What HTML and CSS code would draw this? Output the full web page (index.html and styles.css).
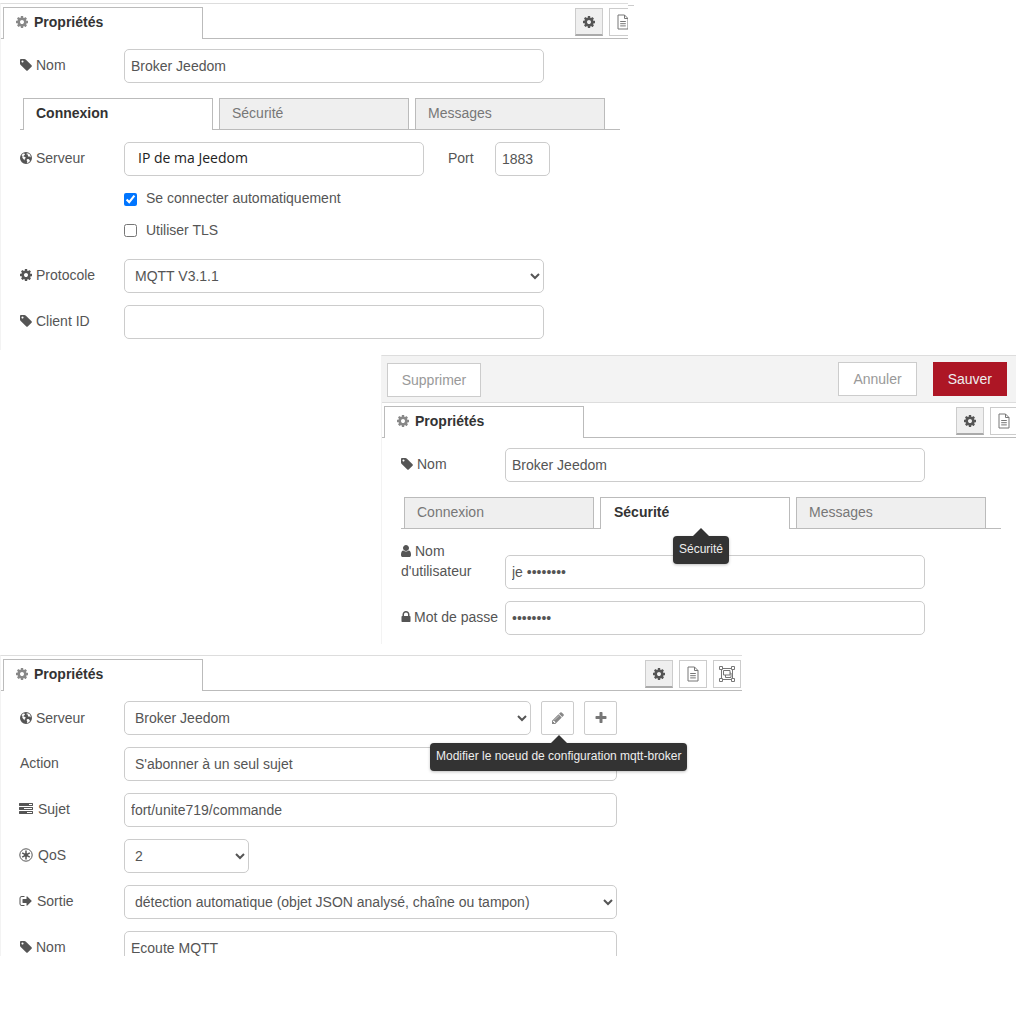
FILE: index.html
```html
<!DOCTYPE html>
<html lang="fr">
<head>
    <meta charset="UTF-8" />
    <title>Propriétés MQTT</title>
    <link rel="stylesheet" href="styles.css">
</head>
<body>
    <svg class="sprite" xmlns="http://www.w3.org/2000/svg">
        <symbol id="i-cog" viewBox="0 0 1792 1792"><path d="M1152 896q0-106-75-181t-181-75-181 75-75 181 75 181 181 75 181-75 75-181zm512-109v222q0 12-8 23t-20 13l-185 28q-19 54-39 91 35 50 107 138 10 12 10 25t-9 23q-27 37-99 108t-94 71q-12 0-26-9l-138-108q-44 23-91 38-16 136-29 186-7 28-36 28h-222q-14 0-24.5-8.5t-11.5-21.5l-28-184q-49-16-90-37l-141 107q-10 9-25 9-14 0-25-11-126-114-165-168-7-10-7-23 0-12 8-23 15-21 51-66.5t54-70.5q-27-50-41-99l-183-27q-13-2-21-12.5t-8-23.5v-222q0-12 8-23t19-13l186-28q14-46 39-92-40-57-107-138-10-12-10-24 0-10 9-23 26-36 98.5-107.5t94.5-71.5q13 0 26 10l138 107q44-23 91-38 16-136 29-186 7-28 36-28h222q14 0 24.5 8.5t11.5 21.5l28 184q49 16 90 37l142-107q9-9 24-9 13 0 25 10 129 119 165 170 7 8 7 22 0 12-8 23-15 21-51 66.5t-54 70.5q26 50 41 98l183 28q13 2 21 12.5t8 23.5z"/></symbol>
        <symbol id="i-tag" viewBox="0 0 1792 1792"><path d="M576 448q0-53-37.5-90.5t-90.5-37.5-90.5 37.5-37.5 90.5 37.5 90.5 90.5 37.5 90.5-37.5 37.5-90.5zm1067 576q0 53-37 90l-491 492q-39 37-91 37-53 0-90-37l-715-716q-38-37-64.5-101t-26.5-117v-416q0-52 38-90t90-38h416q53 0 117 26.5t102 64.5l715 714q37 39 37 91z"/></symbol>
        <symbol id="i-globe" viewBox="0 0 1792 1792"><path fill-rule="evenodd" d="M896 128a768 768 0 1 0 0 1536a768 768 0 1 0 0-1536zM640 300c-120 50-230 130-310 240c60 30 110 70 120 130c10 70-40 110-20 180c30 90 120 130 170 210c30 60 50 130 90 130c30 0 10-90 30-150c30-80 130-90 130-190c0-80-110-100-190-110c-60-10-90-70-60-130c40-60 130-60 160-120c20-50-60-100-120-190zM1010 280c-40 50-70 90-40 140c40 60 130 10 170 70c40 70-40 130 10 190c60 60 150-10 220 30c70 40 40 120 110 130c30-150-20-330-150-450c-90-70-200-110-320-110zM1180 1020c-90 0-190 40-200 120c-10 90 70 130 70 210c0 70-60 120-30 170c170-30 320-130 410-280c-40-30-80-40-100-100c-20-70-70-120-150-120z"/></symbol>
        <symbol id="i-user" viewBox="0 0 1792 1792"><path d="M1536 1399q0 109-62.5 187t-150.5 78h-854q-88 0-150.5-78t-62.5-187q0-85 8.5-160.5t31.5-152 58.5-131 94-89 134.5-34.5q131 128 313 128t313-128q76 0 134.5 34.5t94 89 58.5 131 31.5 152 8.5 160.5zm-256-887q0 159-112.5 271.5t-271.5 112.5-271.5-112.5-112.5-271.5 112.5-271.5 271.5-112.5 271.5 112.5 112.5 271.5z"/></symbol>
        <symbol id="i-lock" viewBox="0 0 1792 1792"><path d="M640 768h512v-192q0-106-75-181t-181-75-181 75-75 181v192zm832 96v576q0 40-28 68t-68 28h-960q-40 0-68-28t-28-68v-576q0-40 28-68t68-28h32v-192q0-184 132-316t316-132 316 132 132 316v192h32q40 0 68 28t28 68z"/></symbol>
        <symbol id="i-pencil" viewBox="0 0 1792 1792"><path d="M491 1536l91-91-235-235-91 91v107h128v128h107zm523-928q0-22-22-22-10 0-17 7l-542 542q-7 7-7 17 0 22 22 22 10 0 17-7l542-542q7-7 7-17zm-54-192l416 416-832 832h-416v-416zm683 96q0 53-37 90l-166 166-416-416 166-165q36-38 90-38 53 0 91 38l235 234q37 39 37 91z"/></symbol>
        <symbol id="i-plus" viewBox="0 0 1792 1792"><path d="M1600 736v192q0 40-28 68t-68 28h-416v416q0 40-28 68t-68 28h-192q-40 0-68-28t-28-68v-416h-416q-40 0-68-28t-28-68v-192q0-40 28-68t68-28h416v-416q0-40 28-68t68-28h192q40 0 68 28t28 68v416h416q40 0 68 28t28 68z"/></symbol>
        <symbol id="i-tasks" viewBox="0 0 1792 1792"><path d="M1024 1408h640v-128h-640v128zm-384-512h1024v-128h-1024v128zm640-512h384v-128h-384v128zm512 832v256q0 26-19 45t-45 19h-1664q-26 0-45-19t-19-45v-256q0-26 19-45t45-19h1664q26 0 45 19t19 45zm0-512v256q0 26-19 45t-45 19h-1664q-26 0-45-19t-19-45v-256q0-26 19-45t45-19h1664q26 0 45 19t19 45zm0-512v256q0 26-19 45t-45 19h-1664q-26 0-45-19t-19-45v-256q0-26 19-45t45-19h1664q26 0 45 19t19 45z"/></symbol>
        <symbol id="i-signout" viewBox="0 0 1792 1792"><path d="M704 1440q0 4 1 20t.5 26.5-3 23.5-10 19.5-20.5 6.5h-320q-119 0-203.5-84.5t-84.5-203.5v-704q0-119 84.5-203.5t203.5-84.5h320q13 0 22.5 9.5t9.5 22.5q0 4 1 20t.5 26.5-3 23.5-10 19.5-20.5 6.5h-320q-66 0-113 47t-47 113v704q0 66 47 113t113 47h312l11.5 1 11.5 3 8 5.5 7 9 2 13.5zm928-544q0 26-19 45l-544 544q-19 19-45 19t-45-19-19-45v-288h-448q-26 0-45-19t-19-45v-384q0-26 19-45t45-19h448v-288q0-26 19-45t45-19 45 19l544 544q19 19 19 45z"/></symbol>
        <symbol id="i-qos" viewBox="0 0 14 14"><circle cx="7" cy="7" r="6.2" fill="none" stroke="currentColor" stroke-width="1"/><path d="M7 2.6v8.8M3.2 4.8l7.6 4.4M10.8 4.8l-7.6 4.4" fill="none" stroke="currentColor" stroke-width="1.5"/><circle cx="7" cy="7" r="1.8"/></symbol>
        <symbol id="i-file" viewBox="0 0 14 16"><path d="M2 1h6.5L12 4.5V15H2zM8.5 1v3.5H12M4.2 7.5h5.6M4.2 9.7h5.6M4.2 11.9h5.6" fill="none" stroke="currentColor" stroke-width="1"/></symbol>
        <symbol id="i-group" viewBox="0 0 16 16"><path d="M2 2.5h12M2 13.5h12M2.5 2v12M13.5 2v12" fill="none" stroke="currentColor" stroke-width="1"/><path d="M4.5 4.5h6.5v4.5H4.5zM6.5 9v2.5h5.5V7H11" fill="none" stroke="currentColor" stroke-width="1"/><path d="M.5.5h3v3h-3zM12.500.5h3v3h-3zM.5 12.500h3v3h-3zM12.500 12.500h3v3h-3z" fill="#fff" stroke="currentColor" stroke-width="1"/></symbol>
    </svg>

    <!-- premier panneau : broker, onglet connexion -->
    <section class="panel panel-one">
        <div class="panel-bar">
            <div class="panel-tab"><svg class="tab-icon"><use href="#i-cog"/></svg>Propriétés</div>
            <div class="tools">
                <span class="tool active"><svg class="tool-cog"><use href="#i-cog"/></svg></span>
                <span class="tool"><svg class="tool-file"><use href="#i-file"/></svg></span>
            </div>
        </div>
        <div class="form">
            <div class="row">
                <label class="field-label"><svg class="ic"><use href="#i-tag"/></svg>Nom</label>
                <input class="field wide" type="text" value="Broker Jeedom" />
            </div>
            <div class="subtabs">
                <div class="subtab active">Connexion</div>
                <div class="subtab">Sécurité</div>
                <div class="subtab">Messages</div>
            </div>
            <div class="row">
                <label class="field-label"><svg class="ic"><use href="#i-globe"/></svg>Serveur</label>
                <input class="field host" type="text" value="IP de ma Jeedom" />
                <label class="port-label">Port</label>
                <input class="field port" type="text" value="1883" />
            </div>
            <div class="check-row">
                <input type="checkbox" checked />
                <span>Se connecter automatiquement</span>
            </div>
            <div class="check-row last">
                <input type="checkbox" />
                <span>Utiliser TLS</span>
            </div>
            <div class="row">
                <label class="field-label"><svg class="ic"><use href="#i-cog"/></svg>Protocole</label>
                <select class="field wide"><option>MQTT V3.1.1</option></select>
            </div>
            <div class="row">
                <label class="field-label"><svg class="ic"><use href="#i-tag"/></svg>Client ID</label>
                <input class="field wide" type="text" />
            </div>
        </div>
    </section>
    <div class="stub"></div>

    <!-- deuxieme panneau : broker, onglet securite -->
    <section class="panel panel-two">
        <div class="toolbar">
            <button class="btn btn-delete">Supprimer</button>
            <button class="btn btn-cancel">Annuler</button>
            <button class="btn btn-save">Sauver</button>
        </div>
        <div class="panel-bar">
            <div class="panel-tab"><svg class="tab-icon"><use href="#i-cog"/></svg>Propriétés</div>
            <div class="tools">
                <span class="tool active"><svg class="tool-cog"><use href="#i-cog"/></svg></span>
                <span class="tool"><svg class="tool-file"><use href="#i-file"/></svg></span>
            </div>
        </div>
        <div class="form">
            <div class="row">
                <label class="field-label"><svg class="ic"><use href="#i-tag"/></svg>Nom</label>
                <input class="field wide" type="text" value="Broker Jeedom" />
            </div>
            <div class="subtabs">
                <div class="subtab">Connexion</div>
                <div class="subtab active">Sécurité</div>
                <div class="subtab">Messages</div>
            </div>
            <div class="row">
                <label class="field-label label-tall"><svg class="ic ic-user"><use href="#i-user"/></svg>Nom d'utilisateur</label>
                <input class="field wide low" type="text" value="je ••••••••" />
            </div>
            <div class="row">
                <label class="field-label"><svg class="ic ic-lock"><use href="#i-lock"/></svg>Mot de passe</label>
                <input class="field wide" type="password" value="12345678" />
            </div>
        </div>
        <div class="tooltip tip-security">Sécurité</div>
    </section>

    <!-- troisieme panneau : noeud mqtt in -->
    <section class="panel panel-three">
        <div class="panel-bar">
            <div class="panel-tab"><svg class="tab-icon"><use href="#i-cog"/></svg>Propriétés</div>
            <div class="tools">
                <span class="tool active"><svg class="tool-cog"><use href="#i-cog"/></svg></span>
                <span class="tool"><svg class="tool-file"><use href="#i-file"/></svg></span>
                <span class="tool"><svg class="tool-group"><use href="#i-group"/></svg></span>
            </div>
        </div>
        <div class="form">
            <div class="row">
                <label class="field-label label-low"><svg class="ic"><use href="#i-globe"/></svg>Serveur</label>
                <select class="field broker"><option>Broker Jeedom</option></select>
                <span class="square"><svg class="square-pencil"><use href="#i-pencil"/></svg></span>
                <span class="square"><svg class="square-plus"><use href="#i-plus"/></svg></span>
            </div>
            <div class="row">
                <label class="field-label">Action</label>
                <select class="field full"><option>S'abonner à un seul sujet</option></select>
            </div>
            <div class="row">
                <label class="field-label"><svg class="ic ic-wide"><use href="#i-tasks"/></svg>Sujet</label>
                <input class="field full" type="text" value="fort/unite719/commande" />
            </div>
            <div class="row">
                <label class="field-label"><svg class="ic ic-wide"><use href="#i-qos"/></svg>QoS</label>
                <select class="field qos"><option>2</option></select>
            </div>
            <div class="row">
                <label class="field-label"><svg class="ic ic-mid"><use href="#i-signout"/></svg>Sortie</label>
                <select class="field full"><option>détection automatique (objet JSON analysé, chaîne ou tampon)</option></select>
            </div>
            <div class="row">
                <label class="field-label"><svg class="ic"><use href="#i-tag"/></svg>Nom</label>
                <input class="field full" type="text" value="Ecoute MQTT" />
            </div>
        </div>
        <div class="tooltip tip-config">Modifier le noeud de configuration mqtt-broker</div>
    </section>
</body>
</html>
```

FILE: styles.css
```css
body {
    margin: 0;
    height: 1024px;
    background-color: #fff;
    font-family: "Liberation Sans", Arial, sans-serif;
    font-size: 14px;
    color: #555;
}
.sprite {
    display: none;
}

/* les trois captures sont posees librement sur la page */
.panel {
    position: absolute;
    box-sizing: border-box;
    overflow: hidden;
    background-color: #fff;
    border-top: 1px solid #ddd;
    border-left: 1px solid #f3f3f3;
}
.panel-one {
    left: 0;
    top: 3px;
    width: 628px;
    height: 347px;
}
.panel-two {
    left: 381px;
    top: 355px;
    width: 635px;
    height: 289px;
}
.panel-three {
    left: 0;
    top: 655px;
    width: 742px;
    height: 301px;
}
.stub {
    position: absolute;
    left: 628px;
    top: 5px;
    width: 6px;
    height: 1px;
    background-color: #ccc;
}

.toolbar {
    display: flex;
    align-items: flex-start;
    box-sizing: border-box;
    height: 47px;
    padding: 6px 9px 0 5px;
    background-color: #f3f3f3;
    border-bottom: 1px solid #ddd;
}
.btn {
    height: 34px;
    padding: 0 14px;
    font-family: inherit;
    font-size: 14px;
    background-color: #fff;
    border: 1px solid #ccc;
    color: #999;
}
.btn-delete {
    width: 94px;
    padding: 0;
    margin-top: 1px;
    margin-right: auto;
}
.btn-cancel {
    margin-right: 16px;
}
.btn-save {
    background-color: #ad1625;
    border-color: #ad1625;
    color: #eee;
}

.panel-bar {
    display: flex;
    box-sizing: border-box;
    height: 35px;
    padding: 3px 0 0 2px;
    border-bottom: 1px solid #bbb;
}
.panel-tab {
    box-sizing: border-box;
    flex: none;
    width: 200px;
    height: 32px;
    padding: 0 12px;
    line-height: 28px;
    font-weight: bold;
    color: #333;
    background-color: #fff;
    border: 1px solid #bbb;
    border-bottom: none;
}
.tab-icon {
    width: 14px;
    height: 14px;
    margin-left: -1px;
    margin-right: 5px;
    vertical-align: -2px;
    fill: #888;
}
.tools {
    display: flex;
    flex: none;
    gap: 6px;
    margin-left: 372px;
    margin-top: 1px;
}
.panel-three .tools {
    margin-left: 442px;
}
.tool {
    display: flex;
    align-items: center;
    justify-content: center;
    box-sizing: border-box;
    width: 28px;
    height: 28px;
    border: 1px solid #ccc;
    color: #777;
}
.tool.active {
    background-color: #efefef;
    border-bottom: 2px solid #aaa;
}
.tool-cog {
    width: 14px;
    height: 14px;
    fill: #555;
}
.tool-file {
    width: 14px;
    height: 16px;
    fill: none;
}
.tool-group {
    width: 16px;
    height: 16px;
    fill: none;
}

.form {
    padding: 10px 0 0 19px;
}
.row {
    display: flex;
    align-items: flex-start;
    margin-bottom: 12px;
}
.field-label {
    box-sizing: border-box;
    flex: none;
    width: 104px;
    padding-top: 6px;
    padding-right: 2px;
    line-height: 20px;
}
.label-tall {
    padding-top: 0;
}
.label-low {
    padding-top: 7px;
}
.ic {
    width: 14px;
    height: 14px;
    margin-left: -1px;
    margin-right: 3px;
    vertical-align: -2px;
    fill: #555;
    color: #555;
}
.ic-wide {
    margin-right: 5px;
}
.ic-mid {
    margin-right: 4px;
}
.ic-user {
    margin-left: -2px;
    margin-right: 2px;
}
.ic-lock {
    margin-left: -2px;
    margin-right: 1px;
}
.field {
    box-sizing: border-box;
    flex: none;
    height: 34px;
    padding: 6px;
    font-family: inherit;
    font-size: 14px;
    color: #555;
    background-color: #fff;
    border: 1px solid #ccc;
    border-radius: 5px;
    outline: none;
}
.wide {
    width: 420px;
}
.full {
    width: 493px;
}
.low {
    margin-top: 14px;
}
.host {
    width: 300px;
    padding: 4px 6px 8px 13px;
    font-family: "Open Sans", sans-serif;
    color: #222;
}
.port-label {
    box-sizing: border-box;
    width: 47px;
    margin-left: 24px;
    padding-top: 6px;
    line-height: 20px;
}
.port {
    width: 55px;
}
.broker {
    width: 407px;
}
.qos {
    width: 125px;
}

.square {
    display: flex;
    align-items: center;
    justify-content: center;
    box-sizing: border-box;
    width: 33px;
    height: 34px;
    margin-left: 10px;
    border: 1px solid #ccc;
    border-radius: 2px;
}
.square-pencil {
    width: 14px;
    height: 14px;
    fill: #888;
}
.square-plus {
    width: 14px;
    height: 14px;
    fill: #777;
}

.check-row {
    display: flex;
    align-items: center;
    height: 20px;
    margin: 0 0 12px 104px;
}
.check-row.last {
    margin-bottom: 19px;
}
.check-row input {
    width: 13px;
    height: 13px;
    margin: 3px 9px 0 0;
}
.check-row.last input {
    margin-top: 1px;
}

.subtabs {
    display: flex;
    gap: 6px;
    height: 31px;
    margin: 15px 0 12px;
    padding-left: 3px;
    width: 597px;
    border-bottom: 1px solid #bbb;
}
.subtab {
    box-sizing: border-box;
    width: 190px;
    height: 32px;
    padding: 0 12px;
    line-height: 28px;
    color: #777;
    background-color: #efefef;
    border: 1px solid #bbb;
}
.subtab.active {
    font-weight: bold;
    color: #333;
    background-color: #fff;
    border-bottom: none;
}
.panel-two .subtab.active {
    padding-left: 13px;
}

/* infobulles au dessus du formulaire */
.tooltip {
    position: absolute;
    box-sizing: border-box;
    height: 28px;
    padding: 0 6px;
    line-height: 27px;
    font-size: 12px;
    white-space: nowrap;
    color: #eee;
    background-color: #333;
    border-radius: 4px;
    box-shadow: 0 1px 3px rgba(0,0,0,0.25);
}
.tooltip::before {
    content: "";
    position: absolute;
    top: -8px;
    width: 0;
    height: 0;
    border-left: 8px solid transparent;
    border-right: 8px solid transparent;
    border-bottom: 8px solid #333;
}
.tip-security {
    left: 291px;
    top: 180px;
}
.tip-security::before {
    left: 20px;
}
.tip-config {
    left: 429px;
    top: 87px;
}
.tip-config::before {
    left: 121px;
}
```
